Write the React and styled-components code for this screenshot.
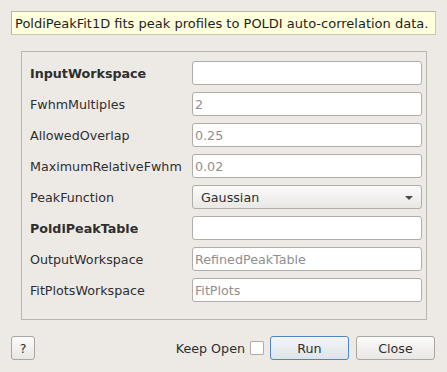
import React from "react";
import styled, { createGlobalStyle } from "styled-components";

const Global = createGlobalStyle`
  html, body { margin: 0; padding: 0; background: #edeae6; }
  body { font-family: "DejaVu Sans", "Liberation Sans", sans-serif; font-size: 12px; color: #2e2e2e; }
  * { box-sizing: border-box; }
`;

const Dialog = styled.div`
  width: 447px;
  height: 372px;
  background: #edeae6;
  display: flex;
  flex-direction: column;
  padding: 11px 11px 0 11px;
`;

const Tip = styled.div`
  height: 24px;
  background: #ffffdc;
  border: 1px solid #c8c6b8;
  border-top-color: #b7b5a7;
  border-left-color: #b7b5a7;
  display: flex;
  align-items: center;
  padding-left: 3px;
  font-size: 13px;
  color: #1e1e1e;
  white-space: nowrap;
`;

const Group = styled.div`
  margin: 16px 9px 0 10px;
  height: 269px;
  border: 1px solid #b9b5b0;
  padding: 9px 4px 0 8px;
  display: grid;
  grid-template-columns: 162px 1fr;
  grid-auto-rows: 24px;
  row-gap: 7px;
  align-content: start;
`;

const Label = styled.div`
  display: flex;
  align-items: center;
  font-size: 12.7px;
  font-weight: ${(p) => (p.$bold ? "bold" : "normal")};
  color: #2e2e2e;
  white-space: nowrap;
`;

const Field = styled.div`
  height: 24px;
  background: #ffffff;
  border: 1px solid #b1ada8;
  border-radius: 3px;
  display: flex;
  align-items: center;
  padding-left: 2px;
  font-size: 12.7px;
  color: #8f8f8f;
`;

const Combo = styled.div`
  height: 24px;
  background: linear-gradient(#fbfbfa, #eae8e5);
  border: 1px solid #b1ada8;
  border-radius: 3px;
  display: flex;
  align-items: center;
  justify-content: space-between;
  padding: 0 8px 0 8px;
  font-size: 12.7px;
  color: #2e2e2e;
`;

const Arrow = styled.span`
  width: 0;
  height: 0;
  border-left: 4px solid transparent;
  border-right: 4px solid transparent;
  border-top: 4px solid #4a4a4a;
  margin-top: 1px;
`;

const Footer = styled.div`
  margin-top: 16px;
  display: flex;
  align-items: center;
  height: 24px;
  padding-right: 1px;
`;

const Button = styled.button`
  height: 24px;
  width: ${(p) => p.$w}px;
  margin-left: ${(p) => p.$ml || 0}px;
  border-radius: 3px;
  border: 1px solid ${(p) => (p.$default ? "#4f86c0" : "#aaa6a1")};
  background: ${(p) =>
    p.$default
      ? "linear-gradient(#f3f5f8, #dfe4ea)"
      : "linear-gradient(#fbfbfa, #e9e7e4)"};
  font-family: "DejaVu Sans", sans-serif;
  font-size: 12.7px;
  color: #2e2e2e;
  padding: 0;
`;

const Spacer = styled.div`
  flex: 1;
`;

const KeepLabel = styled.span`
  font-size: 12.7px;
  color: #2e2e2e;
  margin-right: 5px;
`;

const Check = styled.span`
  width: 14px;
  height: 14px;
  background: #fff;
  border: 1px solid #b1ada8;
  border-radius: 1px;
  margin-right: 6px;
`;

const rows = [
  { label: "InputWorkspace", bold: true, value: "" },
  { label: "FwhmMultiples", value: "2" },
  { label: "AllowedOverlap", value: "0.25" },
  { label: "MaximumRelativeFwhm", value: "0.02" },
  { label: "PeakFunction", combo: "Gaussian" },
  { label: "PoldiPeakTable", bold: true, value: "" },
  { label: "OutputWorkspace", value: "RefinedPeakTable" },
  { label: "FitPlotsWorkspace", value: "FitPlots" },
];

export default function App() {
  return (
    <>
      <Global />
      <Dialog>
        <Tip>PoldiPeakFit1D fits peak profiles to POLDI auto-correlation data.</Tip>
        <Group>
          {rows.map((r) => (
            <React.Fragment key={r.label}>
              <Label $bold={r.bold}>{r.label}</Label>
              {r.combo ? (
                <Combo>
                  {r.combo}
                  <Arrow />
                </Combo>
              ) : (
                <Field>{r.value}</Field>
              )}
            </React.Fragment>
          ))}
        </Group>
        <Footer>
          <Button $w={24}>?</Button>
          <Spacer />
          <KeepLabel>Keep Open</KeepLabel>
          <Check />
          <Button $w={79} $default>Run</Button>
          <Button $w={79} $ml={7}>Close</Button>
        </Footer>
      </Dialog>
    </>
  );
}
